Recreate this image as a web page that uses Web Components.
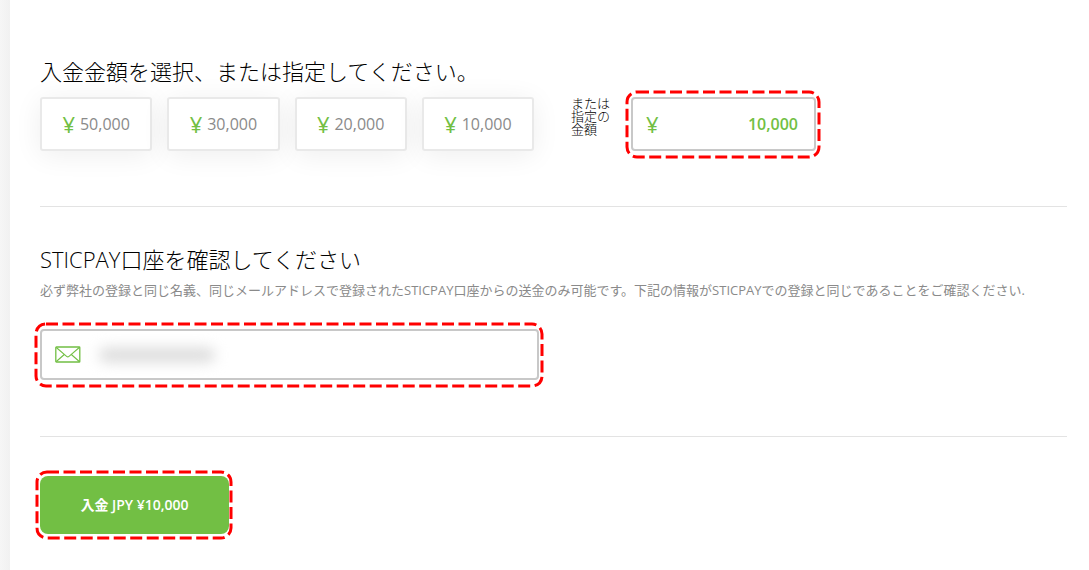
<!DOCTYPE html>
<html lang="ja">
<head>
<meta charset="utf-8">
<meta name="viewport" content="width=device-width, initial-scale=1">
<title>STICPAY 入金</title>
<style>
  html, body { margin: 0; min-height: 100%; }
  body {
    --green: #72bf44;
    --ink: #000;
    --muted: #8a8a8a;
    --mark: #ff0000;
    background: #fff;
    color: var(--ink);
    font: 13px/1 "Open Sans", "Noto Sans CJK JP", sans-serif;
  }
</style>
</head>
<body>
<deposit-page></deposit-page>

<script>
(() => {
  // base for the elements below: clones static markup into an open root
  const define = (name, html, setup) => {
    const tpl = document.createElement('template');
    tpl.innerHTML = html;
    customElements.define(name, class extends HTMLElement {
      connectedCallback() {
        if (this.shadowRoot) return;
        const root = this.attachShadow({ mode: 'open' });
        root.append(tpl.content.cloneNode(true));
        if (setup) setup(this, root);
      }
    });
  };

  // <dash-mark> — rounded dashed outline around whatever is slotted
  define('dash-mark', `
    <style>
      :host { display: block; position: relative; }
      svg { position: absolute; top: -6px; left: -5px; width: calc(100% + 9px); height: calc(100% + 13px);
            overflow: visible; pointer-events: none; }
      :host([tight]) svg { top: -5px; left: -4px; width: calc(100% + 7px); height: calc(100% + 10px); }
      rect { x: 1px; y: 1px; width: calc(100% - 2px); height: calc(100% - 2px); rx: 10px;
             fill: none; stroke: var(--mark); stroke-width: 3px; stroke-dasharray: 12 4.5; }
    </style>
    <slot></slot>
    <svg aria-hidden="true"><rect/></svg>`);

  // <amount-option value="50,000"> — preset amount
  define('amount-option', `
    <style>
      :host { display: block; flex: 1 1 0; }
      button { display: flex; align-items: center; justify-content: center; gap: 5px; width: 100%; height: 54px;
               box-sizing: border-box; padding: 0; border: 2px solid #e9e9e9; border-radius: 3px; background: #fff;
               color: var(--muted); font: 16px/22px "Open Sans", sans-serif; cursor: pointer;
               box-shadow: 0 4px 28px rgba(0, 0, 0, .07); }
      .yen { color: var(--green); font-size: 22px; }
    </style>
    <button type="button"><span class="yen">¥</span><span class="num"></span></button>`,
    (el, root) => { root.querySelector('.num').textContent = el.getAttribute('value'); });

  // <amount-field value="10,000"> — free amount entry
  define('amount-field', `
    <style>
      :host { display: flex; align-items: center; height: 54px; box-sizing: border-box; padding: 0 16px 0 13px;
              border: 2px solid #c8c8c8; border-radius: 4px; background: #fff; color: var(--green); }
      label { font: 22px/22px "Open Sans", sans-serif; }
      input { flex: 1; min-width: 0; padding: 0; border: 0; outline: 0; background: none; color: inherit;
              text-align: right; font: 600 16px/22px "Open Sans", sans-serif; }
    </style>
    <label for="amount">¥</label>
    <input id="amount" type="text" inputmode="numeric" aria-label="指定の金額">`,
    (el, root) => { root.querySelector('input').value = el.getAttribute('value'); });

  // <account-field> — account address, obscured
  define('account-field', `
    <style>
      :host { display: flex; align-items: center; gap: 12px; height: 51px; box-sizing: border-box; padding: 0 13px;
              border: 2px solid #c8c8c8; border-radius: 4px; background: #fff; }
      label { display: flex; }
      svg { fill: none; stroke: var(--green); }
      .value { display: grid; flex: 1; align-items: center; }
      .value > * { grid-area: 1 / 1; }
      input { min-width: 0; padding: 0; border: 0; outline: 0; background: none; font: 16px/22px "Open Sans", sans-serif; }
      .veil { width: 116px; height: 14px; margin-left: 6px; border-radius: 7px; background: #dadada; filter: blur(7px); }
    </style>
    <label for="account" aria-label="STICPAY口座">
      <svg width="26" height="18" viewBox="0 0 26 18" aria-hidden="true">
        <rect x=".8" y="1" width="24" height="15" rx=".6" stroke-width="1.3"/>
        <path d="M1.3 1.5 11.6 10.4Q12.8 11.4 14 10.4L24.3 1.5M1.3 15.5 9.3 8.5M24.3 15.5 16.3 8.5" stroke-width="1.1"/>
      </svg>
    </label>
    <div class="value"><input id="account" type="email" readonly><div class="veil"></div></div>`);

  // <pay-section> — heading, optional note and body, ruled off at the bottom
  define('pay-section', `
    <style>
      :host { display: block; padding-bottom: 55px; border-bottom: 1px solid #e3e3e3; }
      h2 { margin: 0; font-size: 22px; line-height: 30px; font-weight: 300; }
      ::slotted(p) { margin: 6px 0 0; color: var(--muted); line-height: 20px; }
    </style>
    <h2></h2>
    <slot name="note"></slot>
    <slot></slot>`,
    (el, root) => { root.querySelector('h2').textContent = el.getAttribute('heading'); });

  // <pay-button> — submit
  define('pay-button', `
    <style>
      :host { display: block; }
      button { width: 100%; height: 58px; padding: 0; border: 0; border-radius: 8px; background: var(--green);
               color: #fff; font: 600 14px/20px "Open Sans", "Noto Sans CJK JP", sans-serif; cursor: pointer; }
    </style>
    <button type="submit"><slot></slot></button>`);

  define('deposit-page', `
    <style>
      :host { display: block; min-height: 100vh; box-sizing: border-box; padding: 56px 22px 36px 40px;
              background: linear-gradient(90deg, #f6f6f6, #f1f1f1) 0 0 / 10px 100% no-repeat; }
      .amounts { display: flex; align-items: flex-start; margin-top: 11px; }
      .presets { display: flex; flex: 0 1 494px; gap: 15px; }
      .or { flex: none; width: 40px; margin: 0 20px 0 37px; line-height: 13px; font-weight: 300; }
      .custom { flex: 0 1 185px; min-width: 0; }
      .account { margin-top: 29px; max-width: 499px; }
      .second { margin-top: 37px; padding-bottom: 56px; }
      .submit { width: 189px; margin-top: 39px; }
    </style>
    <form>
      <pay-section heading="入金金額を選択、または指定してください。">
        <div class="amounts">
          <div class="presets">
            <amount-option value="50,000"></amount-option>
            <amount-option value="30,000"></amount-option>
            <amount-option value="20,000"></amount-option>
            <amount-option value="10,000"></amount-option>
          </div>
          <div class="or">または<br>指定の<br>金額</div>
          <dash-mark class="custom"><amount-field value="10,000"></amount-field></dash-mark>
        </div>
      </pay-section>
      <pay-section class="second" heading="STICPAY口座を確認してください">
        <p slot="note">必ず弊社の登録と同じ名義、同じメールアドレスで登録されたSTICPAY口座からの送金のみ可能です。下記の情報がSTICPAYでの登録と同じであることをご確認ください.</p>
        <dash-mark class="account"><account-field></account-field></dash-mark>
      </pay-section>
      <dash-mark class="submit" tight><pay-button>入金 JPY ¥10,000</pay-button></dash-mark>
    </form>`);
})();
</script>
</body>
</html>
